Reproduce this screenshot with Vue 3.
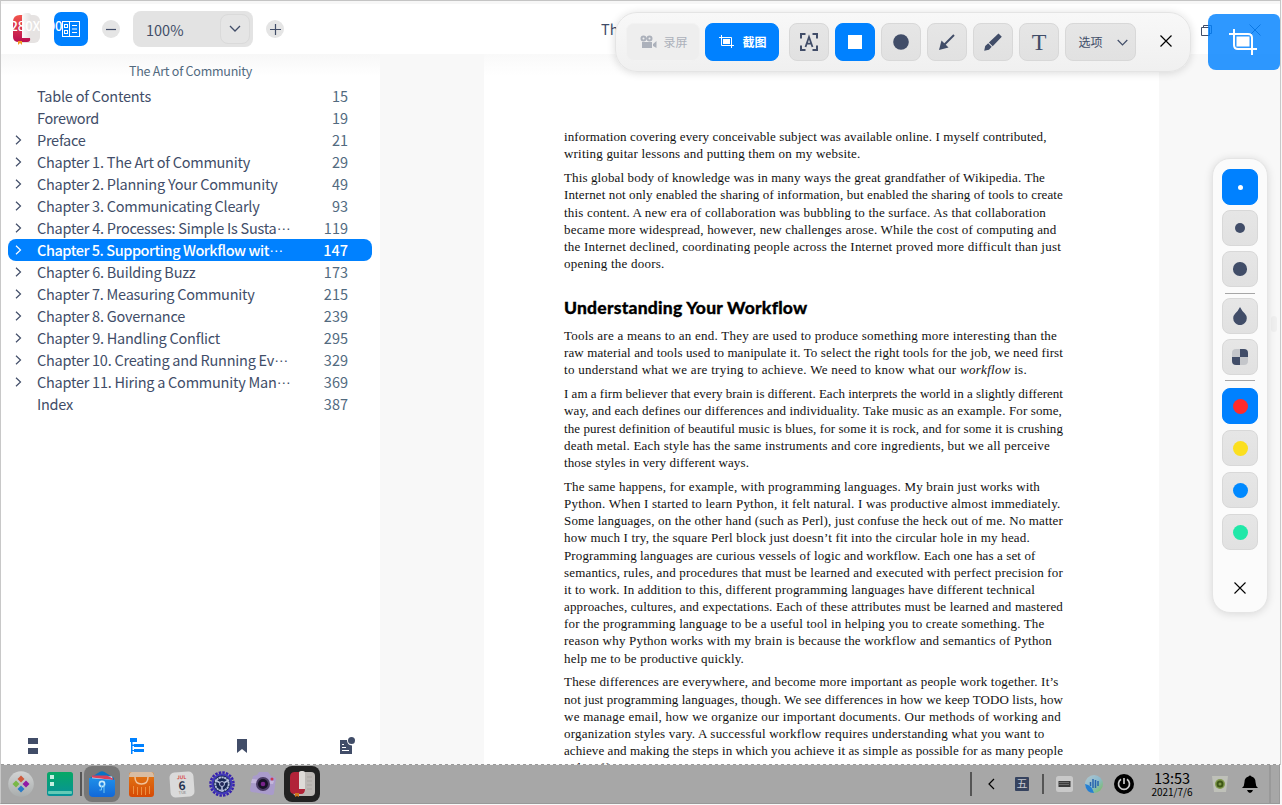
<script setup>
const chapters = [
  ['Table of Contents', 15, false, 114],
  ['Foreword', 19, false, 62],
  ['Preface', 21, true, 48.5],
  ['Chapter 1. The Art of Community', 29, true, 213],
  ['Chapter 2. Planning Your Community', 49, true, 240.5],
  ['Chapter 3. Communicating Clearly', 93, true, 222.5],
  ['Chapter 4. Processes: Simple Is Susta', 119, true, 239.5, true],
  ['Chapter 5. Supporting Workflow wit', 147, true, 232, true],
  ['Chapter 6. Building Buzz', 173, true, 158.5],
  ['Chapter 7. Measuring Community', 215, true, 217.5],
  ['Chapter 8. Governance', 239, true, 148],
  ['Chapter 9. Handling Conflict', 295, true, 183],
  ['Chapter 10. Creating and Running Ev', 329, true, 237, true],
  ['Chapter 11. Hiring a Community Man', 369, true, 239.5, true],
  ['Index', 387, false, 36],
]

const intro = [
  [
    ['information covering every conceivable subject was available online. I myself contributed,', 482.5],
    ['writing guitar lessons and putting them on my website.', 296.5],
  ],
  [
    ['This global body of knowledge was in many ways the great grandfather of Wikipedia. The', 481],
    ['Internet not only enabled the sharing of information, but enabled the sharing of tools to create', 499],
    ['this content. A new era of collaboration was bubbling to the surface. As that collaboration', 482],
    ['became more widespread, however, new challenges arose. While the cost of computing and', 492.5],
    ['the Internet declined, coordinating people across the Internet proved more difficult than just', 497],
    ['opening the doors.', 100.5],
  ],
]

const body = [
  [
    ['Tools are a means to an end. They are used to produce something more interesting than the', 493],
    ['raw material and tools used to manipulate it. To select the right tools for the job, we need first', 499],
    ['to understand what we are trying to achieve. We need to know what our ', 463, 'workflow', ' is.'],
  ],
  [
    ['I am a firm believer that every brain is different. Each interprets the world in a slightly different', 499],
    ['way, and each defines our differences and individuality. Take music as an example. For some,', 498],
    ['the purest definition of beautiful music is blues, for some it is rock, and for some it is crushing', 499],
    ['death metal. Each style has the same instruments and core ingredients, but we all perceive', 486],
    ['those styles in very different ways.', 185],
  ],
  [
    ['The same happens, for example, with programming languages. My brain just works with', 476],
    ['Python. When I started to learn Python, it felt natural. I was productive almost immediately.', 496.5],
    ['Some languages, on the other hand (such as Perl), just confuse the heck out of me. No matter', 499],
    ['how much I try, the square Perl block just doesn’t fit into the circular hole in my head.', 466],
    ['Programming languages are curious vessels of logic and workflow. Each one has a set of', 471.5],
    ['semantics, rules, and procedures that must be learned and executed with perfect precision for', 499],
    ['it to work. In addition to this, different programming languages have different technical', 471],
    ['approaches, cultures, and expectations. Each of these attributes must be learned and mastered', 499],
    ['for the programming language to be a useful tool in helping you to create something. The', 480.5],
    ['reason why Python works with my brain is because the workflow and semantics of Python', 488],
    ['help me to be productive quickly.', 180],
  ],
  [
    ['These differences are everywhere, and become more important as people work together. It’s', 494.5],
    ['not just programming languages, though. We see differences in how we keep TODO lists, how', 499],
    ['we manage email, how we organize our important documents. Our methods of working and', 497],
    ['organization styles vary. A successful workflow requires understanding what you want to', 480.5],
    ['achieve and making the steps in which you achieve it as simple as possible for as many people', 499],
    ['to be effective.', 80],
  ],
]

// Spreads the letters of a line so that it fills its measured column width.
const vFit = {
  mounted(el, { value }) {
    const natural = el.getBoundingClientRect().width
    el.style.letterSpacing = `${(value - natural) / el.textContent.length}px`
  },
}

const sizes = [5, 10, 13.5]
const colors = ['#ff2b2b', '#fbdf1f', '#0089ff', '#20e8a8']
</script>

<template>
  <div class="screen">
    <div class="window">
      <header class="header">
        <svg class="logo" width="28" height="32" viewBox="0 0 28 32">
          <defs>
            <linearGradient id="bk" x1="0" y1="0" x2="0" y2="1"><stop offset="0" stop-color="#f2554c" /><stop offset="1" stop-color="#b90f50" /></linearGradient>
            <linearGradient id="pg" x1="0" y1="0" x2="1" y2="0"><stop offset="0" stop-color="#fbfafa" /><stop offset="1" stop-color="#e4e1e0" /></linearGradient>
          </defs>
          <rect x="4" y="2" width="24" height="28" rx="6" fill="#e6e3e2" />
          <path d="M1 9q0-7 7-7h3v23h7q1 4-3 4H7q-6 0-6-5z" fill="url(#bk)" />
          <path d="M10 3q0-3 4-3h2q3 0 3 3v20l-3 2h-6z" fill="url(#pg)" />
          <path d="M6 28h4v4l-2-2-2 2z" fill="#f59b23" />
        </svg>
        <div class="view-btn">
          <svg width="34" height="34" viewBox="0 0 34 34" fill="none" stroke="#fff" stroke-width="1">
            <rect x="8.500" y="9.500" width="17" height="15" /><path d="M15.500 9.500v15M18 13.500h5M18 17h5M18 20.500h5" /><rect x="10.500" y="12.500" width="3" height="3" /><rect x="10.500" y="18.500" width="3" height="3" />
          </svg>
        </div>
        <div class="round minus"><svg width="18" height="18"><path d="M4 9.500h10" stroke="#414d68" stroke-width="1.200" /></svg></div>
        <div class="zoom-box"><span>100%</span><div class="drop"><svg width="12" height="8" viewBox="0 0 12 8"><path d="M1 1l5 5 5-5" fill="none" stroke="#414d68" stroke-width="1.300" /></svg></div></div>
        <div class="round plus"><svg width="18" height="18"><path d="M4 9.500h11M9.500 4v11" stroke="#414d68" stroke-width="1.200" /></svg></div>
        <span class="doc-title">Th</span>
        <svg class="restore" width="12" height="12" fill="none" stroke="#414d68"><path d="M.5 2.500h8v8h-8zM2.500 2.500v-2h8v8h-2" /></svg>
        <svg class="win-close" width="12" height="12" stroke="#414d68"><path d="M.5.500l11 11M11.500.500l-11 11" /></svg>
      </header>

      <div class="content">
        <aside class="sidebar">
          <div class="book"><span v-fit="123">The Art of Community</span></div>
          <ul class="toc">
            <li v-for="(c, i) in chapters" :key="i" :class="{ active: i === 7 }">
              <svg class="arrow" width="7" height="10" viewBox="0 0 7 10"><path v-if="c[2]" d="M1 .800l4.500 4.200L1 9.200" fill="none" stroke="currentColor" stroke-width="1.200" /></svg>
              <span class="name"><span v-fit="c[3]">{{ c[0] }}</span><span v-if="c[4]" class="more">…</span></span>
              <span class="num">{{ c[1] }}</span>
            </li>
          </ul>
          <div class="tabs">
            <svg width="16" height="16" fill="#414d68"><path d="M3 0h10v6H3zM3 10h10v6H3z" /></svg>
            <svg width="16" height="16" fill="#0081ff"><path d="M0 0h7v4H2.500v2.500H4V6h10v3H4V8H2.500v4H4v-1h10v3H4v-1H2.500v3H1V4H0z" /></svg>
            <svg width="16" height="16" fill="#414d68"><path d="M3 1h10v14l-5-4-5 4z" /></svg>
            <svg width="16" height="18" fill="#414d68"><path d="M1 3h7q0 5 5 5.500V17H1z" /><circle cx="12.500" cy="3.500" r="3.500" /><path d="M3 7.500h2M3 10.500h4M3 13.500h7" stroke="#fff" /></svg>
          </div>
        </aside>
        <main class="reader">
          <article class="page">
            <p v-for="(p, i) in intro" :key="i">
              <span v-for="(l, j) in p" :key="j" class="line"><span v-fit="l[1]">{{ l[0] }}</span></span>
            </p>
            <h2><span v-fit="243.500">Understanding Your Workflow</span></h2>
            <p v-for="(p, i) in body" :key="i">
              <span v-for="(l, j) in p" :key="j" class="line"><span v-fit="l[1]">{{ l[0] }}<em v-if="l[2]">{{ l[2] }}</em>{{ l[3] }}</span></span>
            </p>
          </article>
          <i class="scroll"></i>
        </main>
      </div>
    </div>

    <div class="dims"><span v-fit="59.500">1280X800</span></div>

    <div class="capture-bar">
      <div class="btn wide disabled">
        <svg width="17" height="14" fill="currentColor"><path fill-rule="evenodd" d="M3.500.500a3 3 0 1 1 0 6 3 3 0 0 1 0-6zm0 2a1 1 0 1 0 0 2 1 1 0 0 0 0-2zM9.500.500a3 3 0 1 1 0 6 3 3 0 0 1 0-6zm0 2a1 1 0 1 0 0 2 1 1 0 0 0 0-2z" /><path d="M2 7h10v6H2zM13 9l3.500-3v7L13 11z" /></svg>
        <span>录屏</span>
      </div>
      <div class="btn wide on shot">
        <svg width="16" height="14" fill="none" stroke="#fff"><path d="M0 2.500h12.500V13M2.500 0v10.500H15" /><rect x="4.500" y="4.500" width="6" height="4" fill="#fff" /></svg>
        <span class="strong">截图</span>
      </div>
      <div class="btn ocr"><svg width="20" height="20" fill="none" stroke="#414d68" stroke-width="2"><path d="M2 6.500V2h4.500M13.500 2H18v4.500M18 13.500V18h-4.500M6.500 18H2v-4.500" /><path d="M6.500 15L10 5l3.500 10M7.700 11.700h4.600" stroke-width="1.800" /></svg></div>
      <div class="btn on"><svg width="14" height="14"><rect width="14" height="14" fill="#fff" /></svg></div>
      <div class="btn"><svg width="16" height="16"><circle cx="8" cy="8" r="7.800" fill="#414d68" /></svg></div>
      <div class="btn"><svg width="16" height="16"><path d="M15 1L5.500 10.500" stroke="#414d68" stroke-width="2" /><path d="M0 16L2.500 6.500l7 7z" fill="#414d68" /></svg></div>
      <div class="btn"><svg width="18" height="18" fill="#414d68"><path d="M14.500.500l3.300 3.300L8.700 13.200 4.900 9.400zM4.200 10.300l3.500 3.500-2.700 3L.2 17.800l1-4.800z" /></svg></div>
      <div class="btn letter">T</div>
      <div class="btn options"><span>选项</span><svg width="11" height="7"><path d="M.7 1l4.800 4.800L10.300 1" fill="none" stroke="#414d68" stroke-width="1.200" /></svg></div>
      <svg class="bar-close" width="12" height="12" stroke="#000" stroke-width="1.200"><path d="M.5.500l11 11M11.500.500l-11 11" /></svg>
    </div>

    <div class="capture-app">
      <svg width="30" height="27" viewBox="0 0 30 27" fill="none" stroke="#fff" stroke-width="2"><path d="M0 5h19q4 0 4 4v17M5 0v16q0 4 4 4h19" /><rect x="7.500" y="7.500" width="13" height="10" fill="#fff" stroke="none" /></svg>
    </div>

    <div class="side-panel">
      <div v-for="(s, i) in sizes" :key="s" class="btn sq" :class="{ on: i === 0 }"><i class="dot" :style="{ width: s + 'px', height: s + 'px' }"></i></div>
      <hr />
      <div class="btn sq"><svg width="14" height="18"><path d="M7 0q2 4 4.800 6.500a6.800 6.800 0 1 1-9.600 0Q5 4 7 0z" fill="#414d68" /></svg></div>
      <div class="btn sq"><div class="mosaic"><i></i><i></i><i></i><i></i></div></div>
      <hr class="second" />
      <div v-for="(c, i) in colors" :key="c" class="btn sq color" :class="{ on: i === 0 }"><i class="dot big" :style="{ background: c }"></i></div>
      <svg class="panel-close" width="12" height="12" stroke="#000" stroke-width="1.100"><path d="M.5.500l11 11M11.500.500l-11 11" /></svg>
    </div>

    <footer class="taskbar">
      <div class="cell"><svg width="26" height="26"><defs><linearGradient id="la" x1="0" y1="0" x2="0" y2="1"><stop stop-color="#d2d4d4" /><stop offset="1" stop-color="#a9adad" /></linearGradient></defs><circle cx="13" cy="13" r="12.800" fill="url(#la)" /><path d="M13 4.500l3.500 3.500-3.500 3.500L9.500 8z" fill="#cf5b3d" /><path d="M8 9.500l3.500 3.500L8 16.500 4.500 13z" fill="#79b848" /><path d="M18 9.500l3.500 3.500-3.500 3.500-3.500-3.500z" fill="#921aa6" /><path d="M13 14.500l3.500 3.500-3.500 3.500L9.500 18z" fill="#287bc7" /></svg></div>
      <div class="cell"><svg width="26" height="24"><defs><linearGradient id="gr" x1="0" y1="0" x2="0" y2="1"><stop stop-color="#07a865" /><stop offset="1" stop-color="#079299" /></linearGradient></defs><rect width="26" height="24" rx="2.500" fill="url(#gr)" /><path d="M3 3h4v4H3zM3 10h4v4H3z" fill="#c6efe1" /><rect x="1" y="19" width="24" height="3" rx="1" fill="#64c9b6" /></svg></div>
      <i class="sep left"></i>
      <div class="cell files"><svg width="26" height="26"><defs><linearGradient id="fb" x1="0" y1="0" x2="0" y2="1"><stop stop-color="#1f8fe8" /><stop offset="1" stop-color="#1268d8" /></linearGradient></defs><path d="M1 7L11 .700q2-1 4 0L25 7v4H1z" fill="#0873c4" /><path d="M3 5l20 .500 1 5H3z" fill="#e9e9ef" /><path d="M3 4.500h15l6 3V9L3 6.500z" fill="#d8415b" /><path d="M0 7l26 2v13q0 4-4 4H4q-4 0-4-4z" fill="url(#fb)" /><circle cx="13" cy="13" r="2.600" fill="none" stroke="#c9ecfb" stroke-width="1.600" /><path d="M12.500 15v4h-2M15 14v8" fill="none" stroke="#71c7f3" /></svg></div>
      <div class="cell"><svg width="26" height="26"><defs><linearGradient id="or" x1="0" y1="0" x2="0" y2="1"><stop stop-color="#e27915" /><stop offset="1" stop-color="#d64a05" /></linearGradient></defs><rect y="1" width="25" height="25" rx="3" fill="url(#or)" /><path d="M0 6q0-5 3-5h19q3 0 3 5z" fill="#d9bda3" /><path d="M6 6q0 7 6.500 7T19 6" fill="none" stroke="#efc29b" stroke-width="1.500" /><path d="M4.500 15v8M8.500 16v8M12.500 16v8M16.500 16v8M20.500 15v8" stroke="#ed9142" /></svg></div>
      <div class="cell"><div class="calendar"><b>JUL</b><strong>6</strong><small>TUE</small></div></div>
      <div class="cell"><svg width="26" height="26" viewBox="-13 -13 26 26" fill="none"><circle r="11.500" stroke="#3621ad" stroke-width="2.500" stroke-dasharray="2.500 1.110" /><circle r="9.500" fill="#182653" stroke="#4239bb" stroke-width="2" /><circle r="6.700" stroke="#b6bfdc" stroke-width="1.800" stroke-dasharray="2.300 .500" /><path d="M0 0v8M0 0l-7-4M0 0l7-4" stroke="#b6bfdc" stroke-width="1.500" /><circle r="2.500" fill="#23285a" stroke="#b6bfdc" /></svg></div>
      <div class="cell camera"><svg width="28" height="24"><path d="M4 4l4-1 2-3h9l3 4 5 2-2 15q0 2-3 2L3 20q-2 0-2-3z" fill="#a99bcb" /><path d="M3 7l22 2-1 3L2 11z" fill="#c3b6dc" /><circle cx="14" cy="12" r="7" fill="#4b3c65" /><circle cx="14" cy="12" r="5" fill="#171227" /><circle cx="14" cy="12" r="2.300" fill="#78238a" /><circle cx="23" cy="7" r="1.500" fill="#ce3551" /></svg></div>
      <div class="cell reader-app"><svg width="25" height="26"><rect x="3" y="1" width="22" height="24" rx="4" fill="#bcb8b5" /><path d="M0 6q0-5 5-5h4v17h6q0 5-4 5H5q-5 0-5-4z" fill="#b12338" /><path d="M9 2q0-2 2-2h2q2 0 2 2v16H9z" fill="#dedbd8" /><path d="M5 22h4v4l-2-1-2 1z" fill="#ce751d" /><path d="M17 6h5M17 10h5M17 14h5M17 18h5" stroke="#aaa5a1" /></svg></div>

      <div class="tray">
        <i class="sep"></i>
        <div class="t w37"><svg width="7" height="12"><path d="M6 1L1 6l5 5" fill="none" stroke="#000" stroke-width="1.200" /></svg></div>
        <div class="t w24"><span class="ime">五</span></div>
        <i class="sep mid"></i>
        <div class="t"><svg width="17" height="16"><rect width="17" height="16" rx="2.500" fill="#c9c9c9" /><rect x="2.500" y="5" width="12" height="6" fill="#383838" /><path d="M3.500 6.500h10M3.500 8.500h10" stroke="#999" stroke-dasharray="1 1" /></svg></div>
        <div class="t"><svg width="18" height="18"><defs><linearGradient id="vo" x1="0" y1="0" x2="1" y2="1"><stop stop-color="#b4c7cb" /><stop offset=".5" stop-color="#8dbbd0" /><stop offset="1" stop-color="#78bd53" /></linearGradient></defs><circle cx="9" cy="9" r="9" fill="url(#vo)" /><path d="M0 9q7 1 9 9Q1 18 0 9z" fill="#267fd1" /><path d="M5.500 7v4M8 4v9M10.500 5v8M13 6v5" stroke="#2764ad" stroke-width="1.500" /></svg></div>
        <div class="t"><svg width="20" height="20"><circle cx="10" cy="10" r="10" fill="#000" /><path d="M7 5.300a5.500 5.500 0 1 0 6 0M10 4v6" fill="none" stroke="#c9c9c9" stroke-width="1.700" /></svg></div>
        <div class="clock"><span>13:53</span><small>2021/7/6</small></div>
        <div class="t"><svg width="16" height="16"><path d="M0 0h16l-2 16H2z" fill="#bfc1b9" /><circle cx="8" cy="8" r="5" fill="#80994c" /><circle cx="8" cy="8" r="2.500" fill="none" stroke="#3d5716" stroke-width="2" /></svg></div>
        <div class="t"><svg width="16" height="18"><path d="M0 13q2.500-2 2.500-6 0-4.500 4-5.500Q8-.500 9.500 1.500q4 1 4 5.500 0 4 2.500 6zM5 15h6q-1 3-3 3t-3-3z" fill="#000" /></svg></div>
        <i class="edge"></i>
      </div>
    </footer>
  </div>
</template>

<style>
html, body { margin: 0; overflow: hidden; }
</style>

<style scoped>
* { box-sizing: border-box; }
svg { display: block; flex: none; }
.screen { position: relative; width: 1282px; height: 805px; overflow: hidden; display: flex; flex-direction: column; background: #f8f8f8; font-family: "Noto Sans CJK SC", "Noto Sans", sans-serif; color: #414d68; }
.window { height: 765px; flex: none; border-top: 1px solid #c4c4c4; border-left: 1px solid #c8c8c8; border-right: 1px solid #c8c8c8; display: flex; flex-direction: column; margin-right: 1px; }
.header { height: 53px; flex: none; display: flex; align-items: center; padding: 4px 0 0 11px; background: #fff; border-top: 3px solid #f7f7f7; }
.header > * { flex: none; }
.logo { margin-top: -5px; }
.view-btn { width: 34px; height: 34px; border-radius: 7px; background: #0081ff; margin-left: 14px; margin-top: -4px; }
.round { width: 18px; height: 18px; border-radius: 50%; background: #e5e5e5; margin-top: -4px; }
.minus { margin-left: 14px; }
.plus { margin-left: 13px; }
.zoom-box { width: 120px; height: 36px; border-radius: 8px; background: #e3e3e3; margin: -4px 0 0 13px; padding: 0 3px 0 13px; display: flex; align-items: center; justify-content: space-between; font-size: 14.500px; }
.drop { width: 30px; height: 30px; border-radius: 8px; border: 1px solid #dadada; background: #e5e5e5; display: grid; place-items: center; }
.doc-title { width: 17px; margin-left: 317px; margin-top: -5px; font-size: 14.500px; }
.restore { margin-left: 583px; }
.win-close { margin-left: 36px; margin-top: -3px; }
.content { flex: 1; min-height: 0; display: flex; }
.sidebar { width: 379px; flex: none; display: flex; flex-direction: column; background: linear-gradient(#f7f7f7, #fff 22px); }
.book { height: 31px; line-height: 34px; text-align: center; font-size: 12.500px; color: #526a7f; }
.toc { list-style: none; margin: 0; padding: 0 8px 0 7px; flex: 1; }
.toc li { height: 22px; display: flex; align-items: center; padding: 0 24px 0 7px; border-radius: 8px; font-size: 14.500px; line-height: 22px; white-space: nowrap; }
.arrow { margin-right: 15px; }
.name { flex: 1; }
.more { font-family: "Liberation Sans", sans-serif; line-height: 1; vertical-align: 4px; }
.num { color: #526a7f; }
.toc .active { background: #0081ff; color: #fff; font-weight: 500; }
.active .num { color: #fff; }
.tabs { height: 39px; padding: 1px 25px 0 24px; display: flex; justify-content: space-between; align-items: center; }
.reader { flex: 1; display: flex; position: relative; padding-left: 104px; overflow: hidden; background: #f8f8f8; }
.page { width: 675px; background: linear-gradient(#f9f9f9, #fff 22px); padding: 74.200px 0 0 80px; font-family: "Liberation Serif", serif; font-size: 13px; color: #111; }
.page p { margin: 0 0 6.600px; }
.line { display: block; height: 17.200px; line-height: 17.200px; white-space: nowrap; }
.page h2 { margin: 0; padding-top: 15.900px; height: 48.200px; line-height: 26px; font-family: Lato, sans-serif; font-weight: 900; font-size: 17.500px; color: #000; -webkit-text-stroke: .300px #000; white-space: nowrap; }
.scroll { position: absolute; right: 3px; top: 262px; width: 6px; height: 16px; border-radius: 3px; background: #f0f0f0; }
.dims { position: absolute; left: 3px; top: 16px; font-size: 13px; line-height: 20px; font-weight: 500; color: #fff; pointer-events: none; }

.btn { height: 38px; width: 40px; flex: none; border-radius: 8px; background: linear-gradient(#e6e6e6, #e1e1e1); border: 1px solid #d8d8d8; display: flex; align-items: center; justify-content: center; }
.btn.on { background: #0081ff; border-color: #0081ff; }
.capture-bar { position: absolute; left: 615px; top: 12px; width: 576px; height: 60px; border-radius: 22px; border: 1px solid #e4e4e4; background: linear-gradient(#f8f8f8, #f0f0f0); box-shadow: 0 1px 8px rgba(0, 0, 0, .14); display: flex; align-items: center; padding-left: 10px; gap: 6px; font-size: 12px; }
.wide { width: 74px; gap: 6px; padding-left: 2px; }
.wide span, .options span { margin-top: -1px; }
.disabled { color: #acb1bb; background: #eee; border-color: #f2f2f2; }
.shot { margin-left: -1px; color: #fff; gap: 7px; }
.strong { font-weight: 700; }
.ocr { margin-left: 4px; }
.letter { font-family: "Liberation Serif", serif; font-size: 24px; }
.options { width: 71px; gap: 14px; padding-left: 5px; }
.bar-close { margin-left: 18px; margin-top: -3px; }
.capture-app { position: absolute; left: 1208px; top: 14px; width: 72px; height: 56px; border-radius: 8px 6px 6px 8px; background: rgba(0, 129, 255, .82); display: grid; place-items: center; }
.side-panel { position: absolute; left: 1212px; top: 158px; width: 56px; height: 455px; border-radius: 18px; border: 1px solid #e5e5e5; background: #fbfbfb; box-shadow: 0 1px 8px rgba(0, 0, 0, .13); display: flex; flex-direction: column; align-items: center; padding-top: 10px; gap: 5px; }
.sq { width: 36px; height: 36px; }
.dot { border-radius: 50%; background: #414d68; }
.on .dot { background: #fff; }
.big { width: 15px; height: 15px; }
hr { width: 30px; height: 1px; margin: 1px 0 -1px; border: 0; background: #a6a6a6; flex: none; }
.second { margin: 0 0 2px; }
.color + .color { margin-top: 1px; }
.mosaic { width: 16px; height: 16px; border-radius: 4px; overflow: hidden; display: grid; grid-template-columns: 8px 8px; }
.mosaic i { background: #414d68; }
.mosaic i:nth-child(3n + 1) { background: #c4c6ca; }
.panel-close { margin-top: 27px; }

.taskbar { height: 39px; flex: none; margin: 0 2px 0 0; border-left: 1px solid #c8c8c8; background: #a7a7a7; border-bottom: 1px solid #999; display: flex; align-items: center; position: relative; }
.taskbar::before { content: ""; position: absolute; left: 0; right: 0; top: -1px; height: 1px; background: repeating-linear-gradient(90deg, #999 0 3px, #f5f5f5 3px 6px); }
.cell { width: 40px; height: 36px; flex: none; display: grid; place-items: center; }
.cell:first-child { width: 39px; }
.sep { width: 2px; height: 24px; background: #555; flex: none; }
.sep.left { margin: 0 1px 0 0; }
.files, .reader-app { width: 36px; margin: 0 2px; border-radius: 8px; background: #777; }
.files { margin-left: 1px; }
.camera { padding-left: 2px; }
.reader-app { background: #222; }
.calendar { width: 24px; height: 25px; border-radius: 5px; background: #dadada; display: flex; flex-direction: column; align-items: center; transform: rotate(-4deg); line-height: 1; }
.calendar b { font-size: 5px; color: #d84848; margin-top: 2px; }
.calendar strong { font-size: 12px; line-height: 11px; color: #26334f; }
.calendar small { font-size: 4px; color: #777; }
.tray { margin-left: auto; display: flex; align-items: center; height: 38px; color: #000; }
.t { width: 30px; display: grid; place-items: center; flex: none; }
.w37 { width: 38px; }
.w24 { width: 24px; }
.ime { width: 14px; height: 14px; line-height: 13px; font-size: 11px; text-align: center; border-radius: 1px; background: #36435f; color: #c5c8d0; }
.mid { height: 20px; margin: 0 5px 0 8px; }
.clock { width: 66px; display: flex; flex-direction: column; align-items: center; font-size: 14.500px; line-height: 16px; }
.clock small { font-size: 10px; line-height: 12px; }
.edge { margin-left: 4px; width: 11px; height: 38px; border-left: 2px solid #999; border-right: 1px solid #999; }
</style>
